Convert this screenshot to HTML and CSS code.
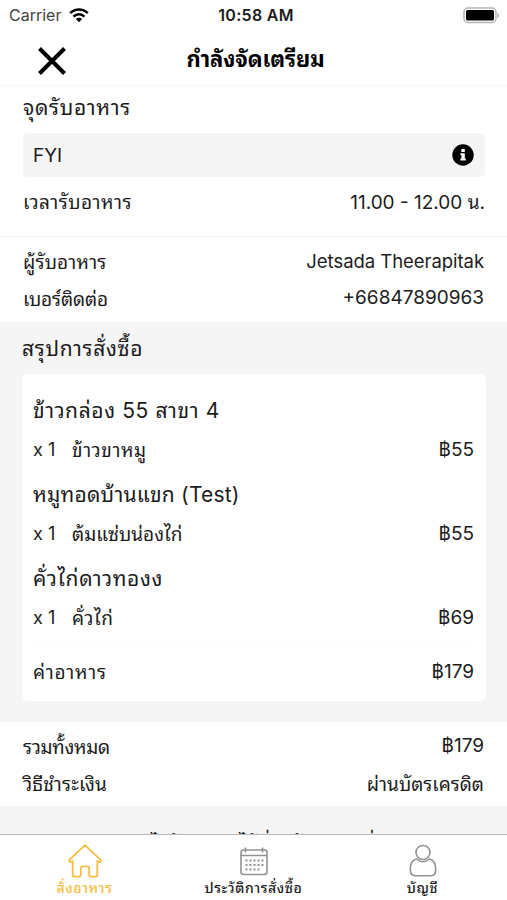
FILE: index.html
```
<!DOCTYPE html>
<html lang="th">

<head>
    <meta charset="UTF-8">
    <meta name="viewport" content="width=device-width, initial-scale=1.0">
    <title>กำลังจัดเตรียม</title>
    <link rel="stylesheet" href="styles.css">
</head>

<body>
    <div class="status-bar">
        <div class="carrier">
            <span>Carrier</span>
            <svg width="20" height="15" viewBox="0 0 20 15" fill="none" stroke="#000" stroke-width="2.5">
                <path d="M1.2 5.2C6.2.3 13.8.3 18.8 5.2" />
                <path d="M4.5 8.6c3.1-3 7.9-3 11 0" />
                <path d="M10 14.2l-3.200-3.300c1.900-1.700 4.500-1.700 6.400 0z" fill="#000" stroke="none" />
            </svg>
        </div>
        <span class="clock">10:58 AM</span>
        <svg class="battery" width="37" height="17" viewBox="0 0 37 17">
            <rect x="1" y="1" width="32" height="14.5" rx="4" fill="#fff" stroke="#b4b4b4" stroke-width="1.5" />
            <rect x="3" y="3" width="28" height="10.5" rx="1.5" />
            <path d="M34.5 6c2.200.6 2.200 4.400 0 5z" fill="#b4b4b4" />
        </svg>
    </div>

    <header class="header">
        <svg class="close" width="28" height="28" viewBox="0 0 28 28" stroke="#000" stroke-width="4">
            <path d="M1.5 1.5l25 25M26.5 1.5l-25 25" />
        </svg>
        <h1>กำลังจัดเตรียม</h1>
    </header>

    <main class="content">
        <section class="pickup">
            <h2>จุดรับอาหาร</h2>
            <div class="place">
                <span>FYI</span>
                <svg width="22" height="22" viewBox="0 0 22 22">
                    <circle cx="11" cy="11" r="10.7" />
                    <path d="M9.300 5h3.500v2.900H9.300zM8.400 9.200h4.400v5.300h1v1.900H8.400v-1.900h1v-3.400h-1z" fill="#fff" />
                </svg>
            </div>
            <div class="row">
                <span class="time-label">เวลารับอาหาร</span>
                <span class="time">11.00 - 12.00 น.</span>
            </div>
        </section>

        <section class="receiver">
            <div class="row">
                <span class="receiver-label">ผู้รับอาหาร</span>
                <span class="name">Jetsada Theerapitak</span>
            </div>
            <div class="row">
                <span class="phone-label">เบอร์ติดต่อ</span>
                <span class="phone">+66847890963</span>
            </div>
        </section>

        <section class="summary">
            <h2>สรุปการสั่งซื้อ</h2>
            <div class="card">
                <h3 class="shop-1">ข้าวกล่อง 55 สาขา 4</h3>
                <div class="item"><span class="qty">x 1</span><span class="dish-1">ข้าวขาหมู</span><span class="price">฿55</span></div>
                <h3 class="shop-2">หมูทอดบ้านแขก (Test)</h3>
                <div class="item"><span class="qty">x 1</span><span class="dish-2">ต้มแซ่บน่องไก่</span><span class="price">฿55</span></div>
                <h3 class="shop-3">คั่วไก่ดาวทองง</h3>
                <div class="item"><span class="qty">x 1</span><span class="dish-3">คั่วไก่</span><span class="price">฿69</span></div>
                <div class="subtotal"><span class="food-label">ค่าอาหาร</span><span class="price">฿179</span></div>
            </div>
        </section>

        <section class="payment">
            <div class="row">
                <span class="total-label">รวมทั้งหมด</span>
                <span class="price">฿179</span>
            </div>
            <div class="row">
                <span class="method-label">วิธีชำระเงิน</span>
                <span class="method">ผ่านบัตรเครดิต</span>
            </div>
        </section>

        <p class="note">สามารถไปรับอาหารได้ที่จุดรับอาหารที่คุณเปิด</p>
    </main>

    <nav class="tabs">
        <a class="tab active">
            <svg width="34" height="34" viewBox="0 0 34 34" fill="none" stroke="#f6bd3f" stroke-width="1.8" stroke-linejoin="round">
                <path d="M17 1.200L1.600 15.700c-1.200 1.300.2 3 1.700 2.100l1.400-.8v13.400c0 1.400.9 2.300 2.300 2.300h3.700c1.400 0 2.100-.8 2.100-2.100v-6c0-1.400.8-2.200 2.100-2.200h4.200c1.300 0 2.100.8 2.100 2.200v6c0 1.300.7 2.100 2.100 2.100H27c1.400 0 2.300-.9 2.300-2.300V17l1.400.8c1.500.9 2.900-.8 1.700-2.100z" />
            </svg>
            <span>สั่งอาหาร</span>
        </a>
        <a class="tab">
            <svg width="30" height="34" viewBox="0 0 30 34" fill="none" stroke="#929292" stroke-width="1.6">
                <rect x="2" y="6" width="26" height="24.500" rx="2.500" />
                <path d="M2 11.500h26M6.500 3.500v5M23.500 3.500v5" />
                <path d="M6.500 16.500h18M6.500 21h18M6.500 25.500h14" stroke-width="2" stroke-dasharray="2 2" />
            </svg>
            <span>ประวัติการสั่งซื้อ</span>
        </a>
        <a class="tab">
            <svg width="28" height="34" viewBox="0 0 28 34" fill="none" stroke="#929292" stroke-width="1.6">
                <circle cx="14" cy="8.500" r="7" />
                <path d="M7.500 15C3.500 15.800 1.300 19 1.300 25.500c0 4.200 1.500 6.200 4.700 6.200h16c3.200 0 4.700-2 4.700-6.200 0-6.500-2.200-9.700-6.200-10.500-4 3.500-9 3.500-13 0z" />
            </svg>
            <span>บัญชี</span>
        </a>
    </nav>
</body>

</html>
```
FILE: styles.css
```
* {
    box-sizing: border-box;
}

body {
    margin: 0;
    height: 900px;
    display: flex;
    flex-direction: column;
    overflow: hidden;
    background: #fff;
    color: #1c1c1c;
    font-family: Inter, Thonburi, "Noto Sans Thai Looped", Loma, Garuda, Waree, "Noto Sans Thai", "Noto Sans", sans-serif;
    font-size: 19px;
}

h1,
h2,
h3,
p {
    margin: 0;
    font-weight: 400;
}

svg {
    display: block;
    flex: none;
}

span,
h1,
h2,
h3 {
    white-space: nowrap;
}

.status-bar {
    height: 30px;
    flex: none;
    display: grid;
    grid-template-columns: 1fr auto 1fr;
    align-items: center;
    padding: 0 7px 0 9px;
}

.carrier {
    display: flex;
    align-items: center;
    gap: 8px;
    font-size: 16px;
    color: #444;
}

.clock {
    padding-left: 3px;
    font-size: 16px;
    font-weight: 600;
    letter-spacing: 0.3px;
}

.battery {
    justify-self: end;
}

.header {
    height: 56px;
    flex: none;
    display: grid;
    grid-template-columns: 76px 1fr 76px;
    align-items: center;
    padding-top: 6px;
    border-bottom: 1px solid #f7f7f7;
    color: #000;
}

.close {
    margin-left: 38px;
}

.header h1 {
    padding: 0 0 7px 4px;
    font-size: 22px;
    font-weight: 700;
    letter-spacing: -0.1px;
    text-align: center;
}

.content {
    flex: 1;
    min-height: 0;
    overflow: hidden;
    background: #f5f5f5;
}

.row,
.place,
.item,
.subtotal {
    display: flex;
    align-items: center;
    justify-content: space-between;
}

.row {
    height: 37px;
}

.pickup {
    height: 151px;
    padding: 0 22px 0 23px;
    background: #fff;
    border-bottom: 1px solid #f3f3f3;
}

.pickup h2 {
    height: 47px;
    line-height: 43px;
    font-size: 21px;
    letter-spacing: 0.7px;
}

.place {
    height: 44px;
    padding: 0 11px 0 10px;
    border-radius: 5px;
    background: #f5f5f5;
}

.pickup .row {
    height: 47px;
}

.time-label {
    letter-spacing: 0.5px;
}

.receiver {
    height: 85px;
    padding: 5px 23px 0;
    background: #fff;
}

.receiver-label {
    letter-spacing: 0.2px;
}

.name {
    font-size: 18.5px;
    letter-spacing: -0.05px;
}

.phone-label {
    letter-spacing: -0.1px;
}

.summary {
    height: 400px;
    padding: 0 21px 0 22px;
}

.summary h2 {
    height: 52px;
    line-height: 54px;
    font-size: 21px;
    letter-spacing: 0.7px;
}

.card {
    height: 327px;
    padding: 16px 12px 0 11px;
    border-radius: 6px;
    background: #fff;
}

.card h3 {
    height: 42px;
    line-height: 42px;
    font-size: 21px;
}

.card .shop-1 {
    letter-spacing: 0.6px;
}

.card .shop-2 {
    letter-spacing: 0.2px;
}

.card .shop-3 {
    letter-spacing: 0.65px;
}

.item {
    height: 42px;
    padding-bottom: 8px;
}

.dish-1,
.dish-2,
.dish-3 {
    padding-bottom: 2px;
}

.dish-1 {
    letter-spacing: 0.6px;
}

.dish-3 {
    letter-spacing: 0.5px;
}

.qty {
    width: 39px;
    font-size: 18px;
}

.price {
    margin-left: auto;
}

.subtotal {
    height: 52px;
    margin-top: 4px;
    padding-bottom: 2px;
    border-top: 1px solid #fafafa;
}

.food-label {
    padding-bottom: 2px;
    letter-spacing: 0.8px;
}

.payment {
    height: 84px;
    padding: 5px 23px;
    background: #fff;
}

.total-label {
    letter-spacing: -0.3px;
}

.method-label {
    letter-spacing: 0.2px;
}

.note {
    padding: 24px 0 0 18px;
    line-height: 28px;
    font-size: 19px;
    text-align: center;
    white-space: nowrap;
}

.tabs {
    height: 66px;
    flex: none;
    display: grid;
    grid-template-columns: repeat(3, 1fr);
    border-top: 1px solid #b8b8b8;
    background: #fff;
}

.tab {
    height: 65px;
    padding-top: 9px;
    display: flex;
    flex-direction: column;
    align-items: center;
    font-size: 14px;
    font-weight: 500;
    line-height: 19px;
    letter-spacing: 0.6px;
}

.tab.active {
    color: #f6bd3f;
}
```
